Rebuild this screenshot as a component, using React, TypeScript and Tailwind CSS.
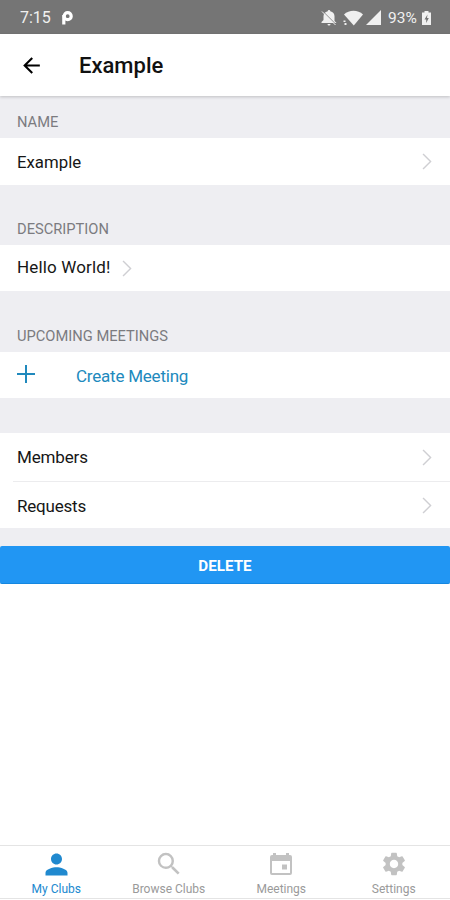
import React from 'react';
import { MdArrowBack, MdPerson, MdSearch, MdSettings } from 'react-icons/md';
import { clsx } from 'clsx';

const CalendarIcon = ({ className }: { className?: string }) => (
  <svg viewBox="0 0 22 22" fill="currentColor" className={className}>
    <path d="M3 0h3v2h10V0h3v2h1a2 2 0 0 1 2 2v16a2 2 0 0 1-2 2H2a2 2 0 0 1-2-2V4a2 2 0 0 1 2-2h1zM2 8v12h18V8z" />
    <path d="M12 11.500h5v5h-5z" />
  </svg>
);

const tabs = [
  { icon: MdPerson, label: 'My Clubs', size: 'size-[33px]', active: true },
  { icon: MdSearch, label: 'Browse Clubs', size: 'size-[30px]', active: false },
  { icon: CalendarIcon, label: 'Meetings', size: 'size-[22px]', active: false },
  { icon: MdSettings, label: 'Settings', size: 'size-[28px]', active: false },
];

function Chevron() {
  return (
    <svg viewBox="0 0 10 18" className="h-[17px] w-[10px] shrink-0" fill="none" stroke="#cfcfd3" strokeWidth="1.500">
      <path d="M.8 1l8 8-8 8" />
    </svg>
  );
}

function StatusBar() {
  return (
    <div className="flex h-[34px] items-center bg-[#757575] pl-5 pr-[19px] text-[#f0f0f0]">
      <span className="pt-[2px] text-[16px] leading-none">7:15</span>
      <svg viewBox="0 0 12 14" className="ml-[10px] mt-[2px] h-[14px] w-[12px]" fill="none" stroke="white" strokeWidth="3.200">
        <circle cx="6.700" cy="5.200" r="3.500" />
        <path d="M2.800 4v9.500" />
      </svg>
      <div className="ml-auto flex items-center pt-px">
        <svg viewBox="0 0 16 16" className="mr-px size-4" fill="currentColor">
          <path d="M8 0a1.300 1.300 0 0 1 1.300 1.300c2.700.6 4.200 2.600 4.200 5V11l2 2H.5v-1l2-2V6.300c0-2.400 1.500-4.400 4.200-5A1.300 1.300 0 0 1 8 0zM6.500 14h3a1.500 1.500 0 0 1-3 0z" />
          <path d="M2 1.500l13.500 13.500" stroke="#757575" strokeWidth="1" />
          <path d="M1 1.500l13.500 13.500" stroke="currentColor" strokeWidth="1" />
        </svg>
        <svg viewBox="0 0 20 16" className="ml-[5px] h-4 w-5" fill="currentColor">
          <path d="M1 4.500C6-.4 15-.4 20 4.500L10.800 15.500z" />
          <path d="M.5 10.500h2v1.500h-2zM1.500 13h2v2h-2z" />
        </svg>
        <svg viewBox="0 0 15 15" className="ml-[3px] size-[15px]" fill="currentColor">
          <path d="M15 0v15H0z" />
        </svg>
        <span className="ml-[7px] w-[30px] whitespace-nowrap pt-[2px] text-[15.500px] leading-none">93%</span>
        <svg viewBox="0 0 9 14" className="ml-[4px] h-[14px] w-[9px]" fill="currentColor">
          <path fillRule="evenodd" d="M2.500 0h4v1.500H9V14H0V1.500h2.500zM5.500 3.500L2.500 8.500h1.700v3.500l2.600-5H5z" />
        </svg>
      </div>
    </div>
  );
}

function SectionHeader({ title, className }: { title: string; className?: string }) {
  return (
    <h2 className={clsx('flex items-end px-[17px] pb-[7px] text-[14.700px] leading-[18px] text-[#7b7b80]', className)}>
      {title}
    </h2>
  );
}

export default function App() {
  return (
    <div className="flex h-[900px] w-[450px] flex-col overflow-hidden bg-white font-['Roboto',sans-serif] text-[#161616]">
      <StatusBar />
      <header className="z-10 flex h-[62px] shrink-0 items-center bg-white pl-[19px] shadow-[0_1px_3px_rgba(0,0,0,0.2)]">
        <MdArrowBack className="size-[25px] text-black" />
        <h1 className="ml-[35px] pt-[2px] text-[22px] font-medium leading-none text-[#111]">Example</h1>
      </header>

      <main className="bg-[#eeeef2]">
        <SectionHeader title="NAME" className="h-[42px]" />
        <div className="flex h-[47px] items-center justify-between bg-white pl-[17px] pr-[18px] text-[16.800px]">
          <span className="pt-[2px]">Example</span>
          <Chevron />
        </div>

        <SectionHeader title="DESCRIPTION" className="h-[60px]" />
        <div className="flex h-[46px] items-center bg-white pl-[17px] text-[17px]">
          <span className="mr-[11px] tracking-[0.150px]">Hello World!</span>
          <Chevron />
        </div>

        <SectionHeader title="UPCOMING MEETINGS" className="h-[61px]" />
        <div className="flex h-[46px] items-center bg-white pl-[17px] text-[17px] text-[#2089bd]">
          <svg viewBox="0 0 18 18" className="mb-[2px] size-[18px]" fill="none" stroke="currentColor" strokeWidth="2">
            <path d="M9 0v18M0 9h18" />
          </svg>
          <span className="ml-[41px] pt-[3px] tracking-[-0.220px]">Create Meeting</span>
        </div>

        <div className="mt-[35px] bg-white text-[17px]">
          <div className="flex h-[48px] items-center justify-between pl-[17px] pr-[18px]">
            <span className="pt-px tracking-[-0.150px]">Members</span>
            <Chevron />
          </div>
          <div className="ml-[13px] flex h-[47px] items-center justify-between border-t border-[#ececee] pl-[4px] pr-[18px]">
            <span className="pt-[3px] tracking-[-0.200px]">Requests</span>
            <Chevron />
          </div>
        </div>

        <div className="pt-[18px]">
          <button className="block h-[38px] w-full rounded-[2px] border-b border-[#1487e0] bg-[#2196f3] pt-[4px] text-[15.200px] font-bold leading-none text-white">
            DELETE
          </button>
        </div>
      </main>

      <nav className="mb-px mt-auto grid h-[54px] grid-cols-4 border-y border-[#e4e4e4]">
        {tabs.map((tab) => (
          <div
            key={tab.label}
            className={clsx('flex flex-col items-center', tab.active ? 'text-[#2089cf]' : 'text-[#9a9a9a]')}
          >
            <span className={clsx('flex h-[36px] items-center', !tab.active && 'text-[#c2c2c2]')}>
              <tab.icon className={tab.size} />
            </span>
            <span className="text-[12px] leading-[14px]">{tab.label}</span>
          </div>
        ))}
      </nav>
    </div>
  );
}
